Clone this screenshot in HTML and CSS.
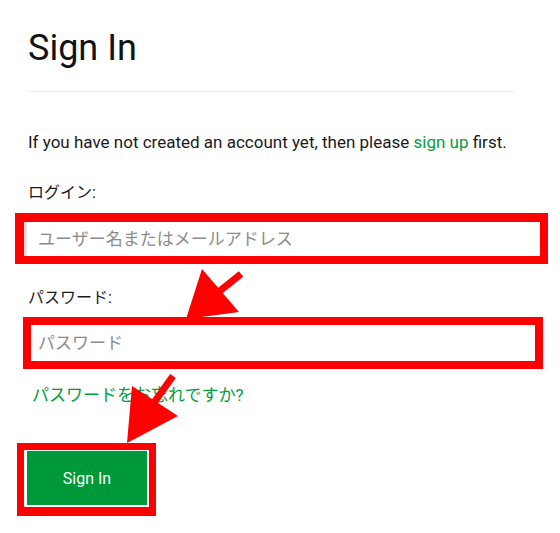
FILE: index.html
```html
<!DOCTYPE html>
<html lang="ja">
<head>
<meta charset="utf-8">
<title>Sign In</title>
<link rel="stylesheet" href="styles.css">
</head>
<body>
<main class="page">
  <h1 class="title">Sign In</h1>
  <hr class="rule">
  <p class="intro">If you have not created an account yet, then please <a class="link" href="#">sign up</a> first.</p>
  <form class="form">
    <label class="label" for="login">ログイン:</label>
    <div class="mark mark-login">
      <input class="field field-login" id="login" type="text" placeholder="ユーザー名またはメールアドレス">
    </div>
    <label class="label label-pass" for="pass">パスワード:</label>
    <div class="mark mark-pass">
      <input class="field field-pass" id="pass" type="password" placeholder="パスワード">
    </div>
    <a class="forgot" href="#">パスワードをお忘れですか?</a>
    <div class="mark mark-btn">
      <button class="btn" type="button">Sign In</button>
    </div>
  </form>
  <svg class="arrows" width="560" height="533" viewBox="0 0 560 533">
    <line x1="241" y1="274" x2="216" y2="294" stroke="#ff0000" stroke-width="7"/>
    <polygon points="202,269 239,312 186,319" fill="#ff0000"/>
    <line x1="173" y1="376" x2="153" y2="404" stroke="#ff0000" stroke-width="7"/>
    <polygon points="132,386 178,416 127,443" fill="#ff0000"/>
  </svg>
</main>
</body>
</html>
```
FILE: styles.css
```css
html, body {
  margin: 0;
  padding: 0;
  background: #ffffff;
}
body {
  font-family: Roboto, "Noto Sans CJK JP", sans-serif;
  color: #1a1a1a;
}
.page {
  position: relative;
  width: 560px;
  height: 533px;
  box-sizing: border-box;
  padding: 26px 45px 0 28px;
  overflow: hidden;
}
.title {
  margin: 0;
  font-size: 36px;
  line-height: 44px;
  font-weight: 400;
  color: #111111;
}
.rule {
  margin: 21px 0 0 0;
  border: 0;
  border-top: 1px solid #eeeeee;
  height: 0;
}
.intro {
  margin: 38px 0 0 0;
  font-size: 17px;
  line-height: 24px;
  white-space: nowrap;
}
.link {
  color: #00a03c;
  text-decoration: none;
}
.form {
  display: flex;
  flex-direction: column;
  align-items: flex-start;
}
.label {
  display: block;
  margin-top: 27px;
  font-size: 16px;
  line-height: 24px;
  color: #1a1a1a;
}
.label-pass {
  margin-top: 22px;
}
.mark {
  box-sizing: border-box;
  border: solid #ff0000;
  background: #ffffff;
}
.mark-login {
  margin: 8px 0 0 -13px;
  width: 533px;
  border-width: 9px 8px 8px 9px;
}
.mark-pass {
  margin: 7px 0 0 -5px;
  width: 520px;
  border-width: 8px;
}
.field {
  display: block;
  box-sizing: border-box;
  width: 100%;
  margin: 0;
  border: 0;
  outline: none;
  background: #ffffff;
  font-family: Roboto, "Noto Sans CJK JP", sans-serif;
  font-size: 17px;
  color: #333333;
}
.field::placeholder {
  color: #8c8c8c;
}
.field-login {
  height: 34px;
  border-left: 3px solid #e2e2e2;
  padding: 0 0 0 11px;
}
.field-pass {
  height: 36px;
  padding: 0 0 0 7px;
}
.forgot {
  display: block;
  margin: 14px 0 0 4px;
  font-size: 17px;
  line-height: 24px;
  color: #00a03c;
  text-decoration: none;
}
.mark-btn {
  margin: 36px 0 0 -11px;
  border-width: 7px 7px 9px 7px;
  padding: 1px 2px 2px 3px;
}
.btn {
  display: block;
  width: 120px;
  height: 54px;
  margin: 0;
  border: 0;
  background: #00993a;
  color: #ffffff;
  font-family: Roboto, sans-serif;
  font-size: 16px;
  cursor: pointer;
}
.arrows {
  position: absolute;
  left: 0;
  top: 0;
  pointer-events: none;
}
```
